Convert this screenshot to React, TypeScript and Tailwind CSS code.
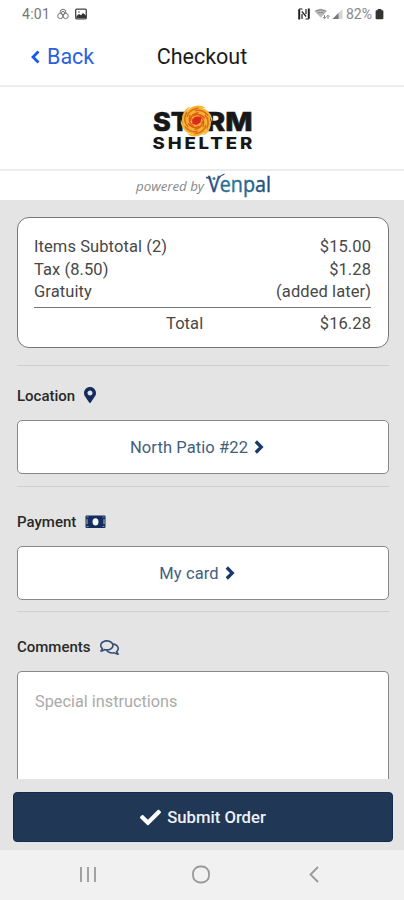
import type { ReactNode } from "react";
import clsx from "clsx";
import { FaCheck, FaMapMarkerAlt, FaRegComments } from "react-icons/fa";

function StatusBar() {
  return (
    <div className="flex h-7 items-center justify-between pl-[22px] pr-[20px] text-[#777]">
      <div className="flex items-center">
        <span className="w-[35px] text-[14px] leading-7 tracking-[0.3px]">4:01</span>
        <svg className="h-3 w-3" viewBox="0 0 12 12" fill="none" stroke="#777" strokeWidth="1">
          <path d="M3.2 5.2V4a2.8 2.8 0 0 1 5.6 0v1.2" />
          <circle cx="3.3" cy="8" r="2.6" />
          <circle cx="8.7" cy="8" r="2.6" />
          <circle cx="6" cy="5" r="1.6" />
        </svg>
        <svg className="ml-[6px] h-3 w-3" viewBox="0 0 12 12">
          <rect x=".7" y="1.2" width="10.6" height="9.6" rx="1" fill="none" stroke="#444" strokeWidth="1.3" />
          <path d="M1.5 10V8l2.5-2 2 1.2L8 5l3 2.5V10z" fill="#333" />
          <circle cx="4" cy="4" r=".8" fill="#555" />
        </svg>
      </div>
      <div className="flex items-center">
        <svg className="h-3 w-3" viewBox="0 0 12 12" fill="none" stroke="#222">
          <path d="M1.2 11.5V1.2M10.8.5v10.3" strokeWidth="2" />
          <path d="M1 1h3.5M7.5 11H11M3.8 3.5l4.4 5M4 11V6M8 1v5" strokeWidth="1.2" />
        </svg>
        <svg className="ml-1 h-3 w-4" viewBox="0 0 16 12">
          <path d="M.5 3Q6.5-1.5 13 3L6.7 9.8z" fill="#bbb" />
          <path d="M1.5 3.2q5-3 10.3 0M3.4 5.2q3.3-2 6.6 0" fill="none" stroke="#888" />
          <path d="M10.5 7v3.5M9 9l1.5 1.7L12 9M14 11V7.5m-1.5 1.3L14 7.2l1.5 1.6" fill="none" stroke="#888" />
        </svg>
        <svg className="ml-0.5 h-3 w-[11px]" viewBox="0 0 11 12">
          <path d="M10.5 1v10H.5z" fill="#d4d4d4" />
          <path d="M6.5 5v6h-6z" fill="#777" />
        </svg>
        <span className="ml-[3px] w-[29px] text-[14px] leading-7 text-[#888]">82%</span>
        <svg className="h-[12px] w-[9px]" viewBox="0 0 9 13" fill="#333">
          <path d="M2.5 1h4v2h-4zM1 2.5h7a.7.7 0 0 1 .7.7v8a1 1 0 0 1-1 1H1.3a1 1 0 0 1-1-1v-8a.7.7 0 0 1 .7-.7z" />
        </svg>
      </div>
    </div>
  );
}

function Header() {
  return (
    <header className="grid h-[59px] grid-cols-3 items-center border-b-2 border-[#ececec]">
      <button className="flex items-center pl-[30px] pt-px text-[21.5px] leading-none text-[#2a62dd]">
        <svg className="mr-[7px] h-[14px] w-[10px]" viewBox="0 0 10 14" fill="none" stroke="#1458ed" strokeWidth="2.8">
          <path d="M8.5 1.5 3 7l5.5 5.5" />
        </svg>
        Back
      </button>
      <h1 className="whitespace-nowrap text-center text-[21.5px] leading-none text-[#1b1b1b]">Checkout</h1>
    </header>
  );
}

const blades = [0, 60, 120, 180, 240, 300];

function StormLogo() {
  return (
    <div className="flex h-[82px] justify-center">
      <svg className="h-[82px] w-[120px]" viewBox="142 87 120 82" fill="#171717">
        <g fontFamily="Inter" fontWeight="800" fontSize="25.5" stroke="#171717" strokeWidth=".6">
          <text x="153" y="130.5" textLength="36" lengthAdjust="spacingAndGlyphs">ST</text>
          <text x="206" y="130.5" textLength="46.5" lengthAdjust="spacingAndGlyphs">RM</text>
        </g>
        <g transform="translate(152.5 149) scale(1.16 1)">
          <text fontFamily="Inter" fontWeight="800" fontSize="16" textLength="86" lengthAdjust="spacing">
            SHELTER
          </text>
        </g>
        <circle cx="196.5" cy="121" r="12.5" fill="#f3b42c" />
        {blades.map((angle) => (
          <g key={angle} transform={`rotate(${angle} 196.5 121)`}>
            <path d="M185 114q4-8 13-8.5 5 0 8 3-7-2-12 1z" fill="#f4b630" />
            <path d="M187 117q2-8 12-9" fill="none" stroke="#e2661f" strokeWidth="1.4" />
            <path d="M190.5 121q0-7 8-8.5" fill="none" stroke="#e05a1e" strokeWidth="1.4" />
          </g>
        ))}
        <path d="M192 120q2-4 6-3.5l3.5 1-1 5-4 2.5-4-1z" fill="#dc2a20" />
      </svg>
    </div>
  );
}

function PoweredBy() {
  return (
    <div className="flex h-[31px] justify-center border-t-2 border-[#ececec]">
      <svg className="h-[29px] w-[150px] overflow-visible" viewBox="127 171 150 29">
        <defs>
          <linearGradient id="venpal" x1="0" x2="1">
            <stop offset="0" stopColor="#263f76" />
            <stop offset=".35" stopColor="#287b9b" />
            <stop offset="1" stopColor="#234879" />
          </linearGradient>
        </defs>
        <text x="136" y="190.5" fontFamily="Open Sans" fontStyle="italic" fontSize="12.5" fill="#888" textLength="68" lengthAdjust="spacingAndGlyphs">
          powered by
        </text>
        <text x="208" y="192" fontFamily="Open Sans" fontWeight="500" fontSize="21" fill="url(#venpal)" stroke="url(#venpal)" strokeWidth=".4" textLength="63" lengthAdjust="spacingAndGlyphs">
          Venpal
        </text>
        <path d="M206 177.5q3 0 5 2M218.5 178.5q2-3 6-4.5" fill="none" stroke="#35506e" strokeWidth="1.3" />
        <circle cx="214" cy="178.5" r="1.5" fill="#2e80a4" />
      </svg>
    </div>
  );
}

function SummaryRow({ label, value }: { label: string; value: string }) {
  return (
    <div className="flex justify-between">
      <span>{label}</span>
      <span>{value}</span>
    </div>
  );
}

function Summary() {
  return (
    <div className="mt-[17px] h-[131px] rounded-xl border border-[#777] bg-white pl-[16px] pr-[17px] pt-[18px] text-[16.5px] leading-[22.7px] tracking-[0.08px] text-[#484848]">
      <SummaryRow label="Items Subtotal (2)" value="$15.00" />
      <SummaryRow label="Tax (8.50)" value="$1.28" />
      <SummaryRow label="Gratuity" value="(added later)" />
      <div className="mt-[3px] flex justify-end border-t border-[#777] pt-[5px]">
        <span className="mr-auto pl-[132px]">Total</span>
        <span>$16.28</span>
      </div>
    </div>
  );
}

function SectionTitle({ title, icon, compact = false }: { title: string; icon: ReactNode; compact?: boolean }) {
  return (
    <h2
      className={clsx(
        "flex items-center gap-[9px] border-t border-[#cfcfcf] text-[15px] font-medium text-[#292929]",
        compact ? "h-[55px] pt-[6px]" : "h-[60px] pt-[11px]",
      )}
    >
      {title}
      {icon}
    </h2>
  );
}

function BillIcon() {
  return (
    <svg className="h-[14px] w-[21px]" viewBox="0 0 21 14">
      <rect x=".5" y=".5" width="20" height="12.5" rx="1" fill="#142d5c" />
      <path d="M2 4.2v5M19 4.2v5" stroke="#b5bccb" strokeWidth="1" />
      <path d="M1.5 2h2M17.5 2h2M1.5 11.5h2M17.5 11.5h2" stroke="#8290a8" strokeWidth="1" />
      <ellipse cx="10.5" cy="6.8" rx="3" ry="3.6" fill="#f3f5f8" />
    </svg>
  );
}

function PickerButton({ children }: { children: ReactNode }) {
  return (
    <button className="flex h-[54px] w-full items-center justify-center gap-[6px] rounded-[5px] border border-[#888] bg-white pr-[12px] pt-[2px] text-[16.5px] tracking-[0.1px] text-[#42607e]">
      {children}
      <svg className="mb-[3px] h-[14px] w-[10px]" viewBox="0 0 10 14" fill="none" stroke="#18396b" strokeWidth="3.2">
        <path d="m1.8 1.5 5.5 5.5-5.5 5.5" />
      </svg>
    </button>
  );
}

function NavBar() {
  return (
    <nav className="flex h-[50px] items-center bg-[#f1f1f1]">
      <svg className="h-[50px] w-full" viewBox="0 850 404 50" fill="none" stroke="#999" strokeWidth="1.8">
        <path d="M81 867v15M88 867v15M95 867v15" />
        <rect x="193" y="866.5" width="16" height="16" rx="7" />
        <path d="m318 867-7.5 7.5 7.5 7.5" />
      </svg>
    </nav>
  );
}

export default function App() {
  return (
    <div className="flex h-[900px] w-full flex-col overflow-hidden bg-white font-['Roboto',sans-serif]">
      <StatusBar />
      <Header />
      <StormLogo />
      <PoweredBy />
      <main className="flex h-[650px] flex-col bg-[#e4e4e4]">
        <div className="flex flex-col pl-[17px] pr-[15px]">
          <Summary />
          <div className="mt-[17px] pb-[12px]">
            <SectionTitle compact title="Location" icon={<FaMapMarkerAlt className="mb-0.5 h-4 w-3 text-[#142d5c]" />} />
            <PickerButton>North Patio #22</PickerButton>
          </div>
          <div className="pb-[11px]">
            <SectionTitle title="Payment" icon={<BillIcon />} />
            <PickerButton>My card</PickerButton>
          </div>
          <SectionTitle title="Comments" icon={<FaRegComments className="h-[17px] w-[19px] text-[#344e75]" />} />
          <textarea
            placeholder="Special instructions"
            className="h-[108px] resize-none rounded-t-[5px] border border-b-0 border-[#888] bg-white px-[17px] pt-[18px] text-[16.3px] placeholder:text-[#aaa]"
          />
        </div>
        <button className="ml-[13px] mr-[11px] mt-[13px] flex h-[50px] shrink-0 items-center justify-center gap-[6px] rounded-[4px] border border-[#142b50] bg-[#203756] pt-[2px] text-[16.7px] font-medium text-[#edf1f5]">
          <FaCheck className="mb-0.5 h-[21px] w-[21px] text-white" />
          Submit Order
        </button>
      </main>
      <NavBar />
    </div>
  );
}
